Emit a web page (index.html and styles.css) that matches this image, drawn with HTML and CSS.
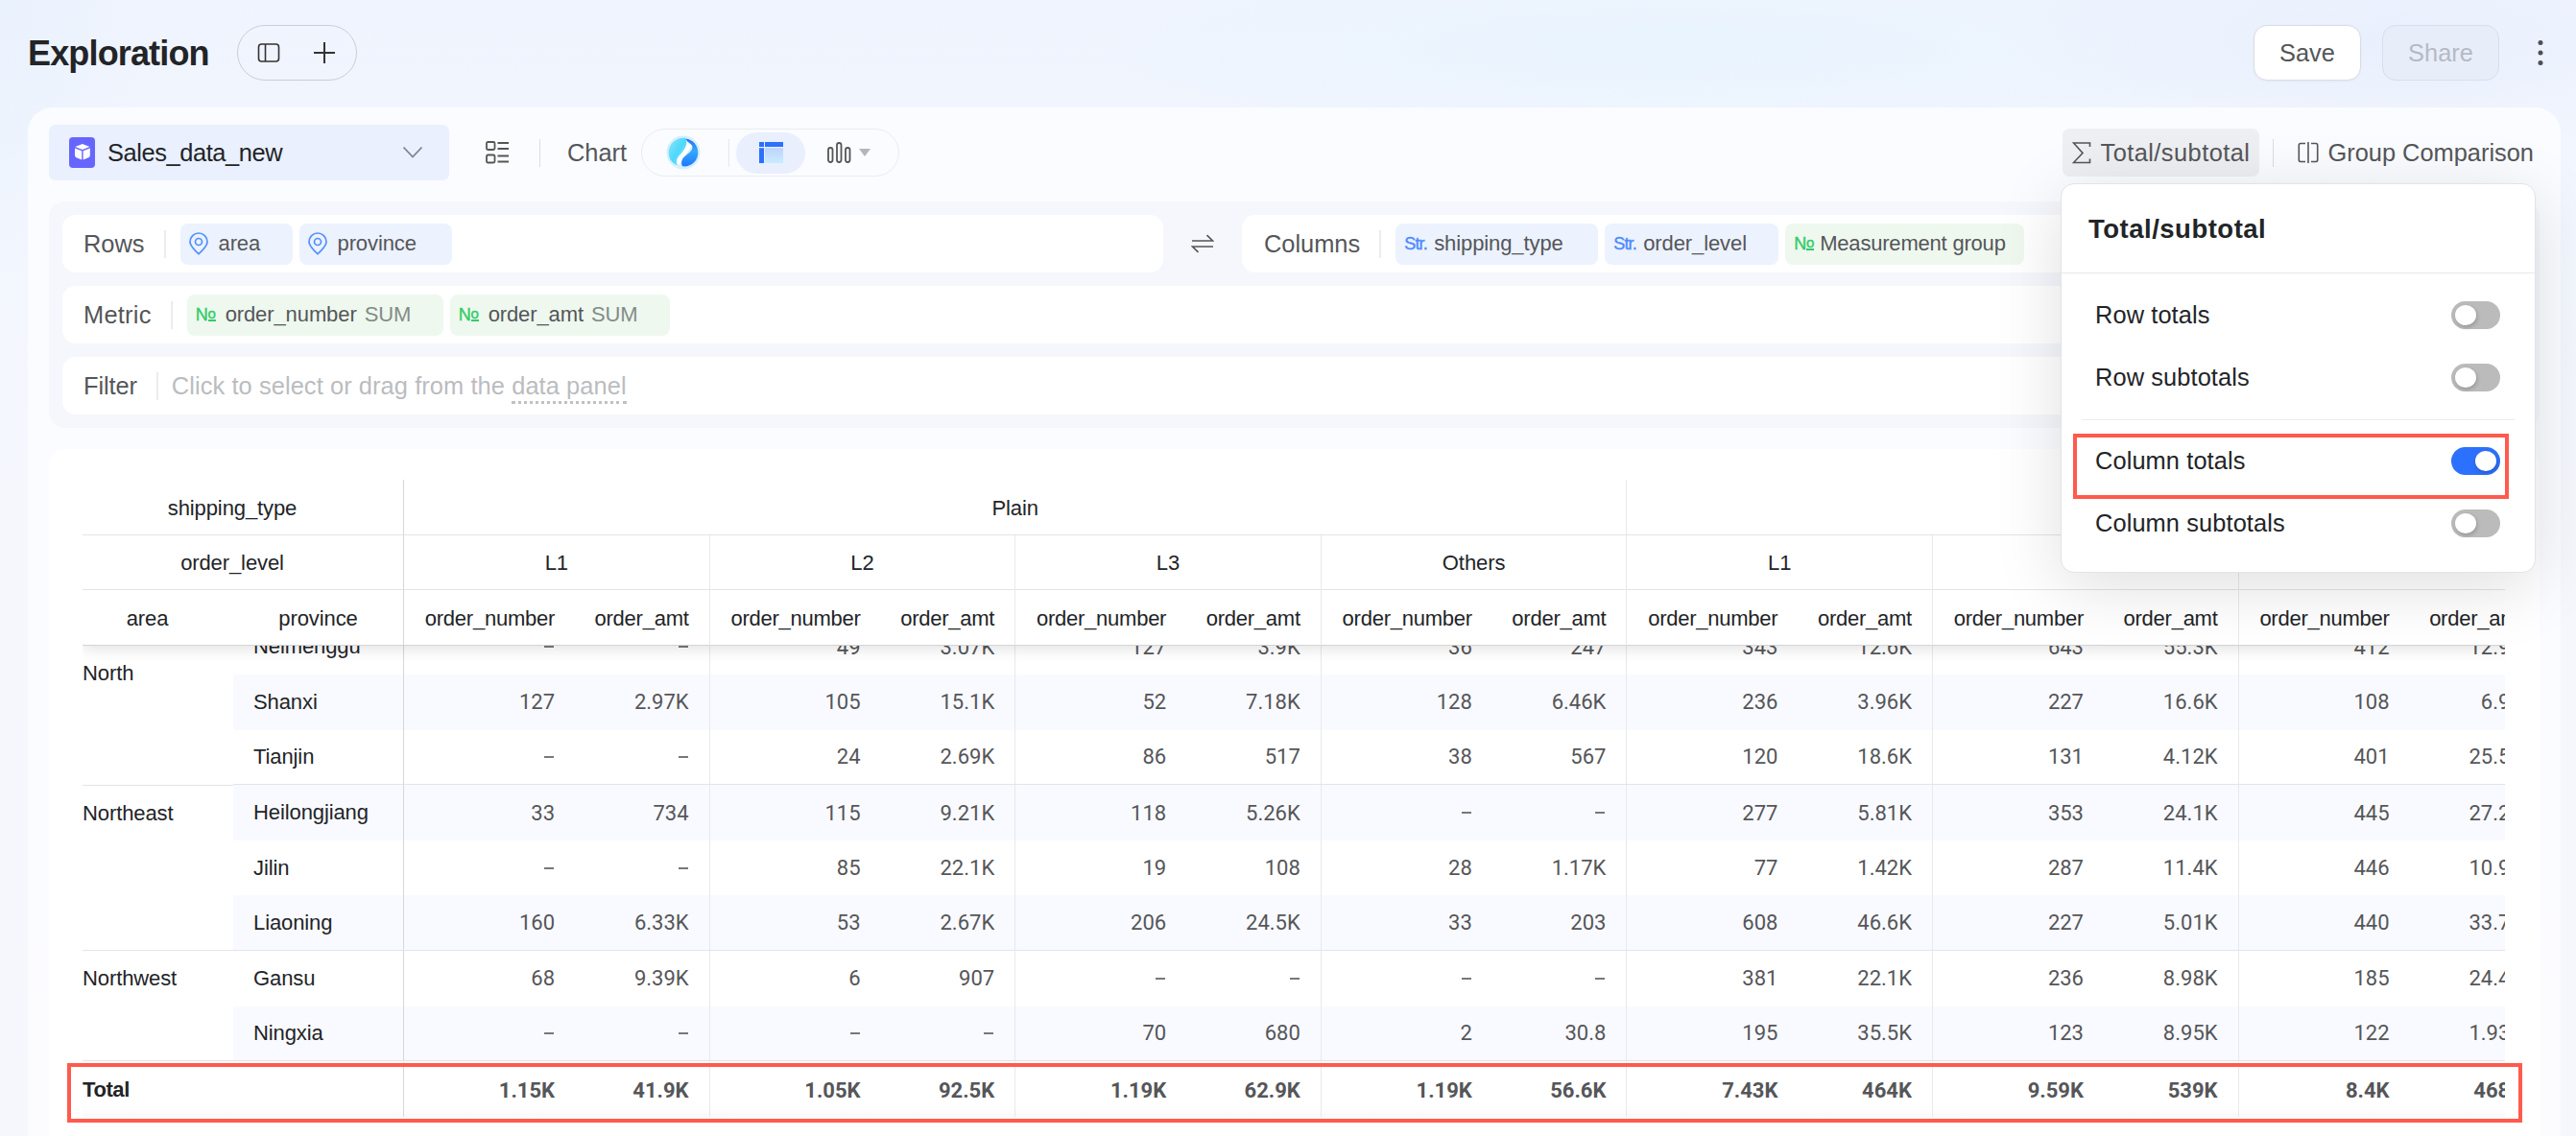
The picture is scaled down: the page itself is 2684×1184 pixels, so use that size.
FILE: index.html
```html
<!DOCTYPE html>
<html lang="en">
<head>
    <meta charset="UTF-8">
    <title>Exploration</title>
    <meta name="viewport" content="width=device-width, initial-scale=1.0">
    <link rel="stylesheet" href="styles.css">
</head>
<body>
    <header class="topbar">
        <h1>Exploration</h1>
        <div class="tab-pill">
            <svg width="24" height="24" viewBox="0 0 24 24" fill="none" stroke="#333" stroke-width="1.6"><rect x="1.5" y="3" width="21" height="18" rx="3"/><path d="M8.5 3v18"/></svg>
            <svg width="24" height="24" viewBox="0 0 24 24" fill="none" stroke="#333" stroke-width="2"><path d="M12 1v22M1 12h22"/></svg>
        </div>
        <div class="top-actions">
            <button class="btn">Save</button>
            <button class="btn disabled">Share</button>
            <svg class="more" width="6" height="28" viewBox="0 0 6 28" fill="#4d4f54"><circle cx="3" cy="3.5" r="2.5"/><circle cx="3" cy="14" r="2.5"/><circle cx="3" cy="24.5" r="2.5"/></svg>
        </div>
    </header>

    <main class="panel">
        <div class="toolbar">
            <div class="dataset">
                <svg width="27" height="32" viewBox="0 0 27 32"><rect width="27" height="32" rx="4" fill="#6666ff"/><path d="M13.9 7l7.6 2.9-7.600 3.100-7.600-3.100z" fill="#fff"/><path d="M6 11.600l7.200 2.600v9.200l-5.700-2.200Q6 20.500 6 19z" fill="#fff"/><path d="M21.800 11.600l-7.200 2.600v9.200l5.700-2.200Q21.800 20.500 21.800 19z" fill="#fff"/></svg>
                <span>Sales_data_new</span>
                <svg class="chevron" width="22" height="14" viewBox="0 0 22 14" fill="none" stroke="#7d8391" stroke-width="1.8"><path d="M1.500 1.500L11 11.500l9.500-10"/></svg>
            </div>
            <svg class="list-icon" width="24" height="24" viewBox="0 0 24 24" fill="none" stroke="#555" stroke-width="1.800"><rect x="1" y="1" width="8.500" height="8" rx="1.500"/><rect x="1" y="14.500" width="8.500" height="8" rx="1.500"/><path d="M12.500 2H24M12.500 8H24M12.500 15.500H24M12.500 21.500H24"/></svg>
            <i class="sep"></i>
            <span class="chart-label">Chart</span>
            <div class="chart-pill">
                <svg class="smart" width="36" height="36" viewBox="0 0 36 36">
                    <defs>
                        <linearGradient id="aqua" x1="0" y1="0" x2="1" y2="1"><stop offset="0" stop-color="#8ae6f8"/><stop offset=".5" stop-color="#4ed8fb"/><stop offset="1" stop-color="#9cecfb"/></linearGradient>
                        <linearGradient id="blue" x1="0" y1="0" x2="0" y2="1"><stop offset="0" stop-color="#1f6dff"/><stop offset=".45" stop-color="#35a8fc"/><stop offset="1" stop-color="#1f78ff"/></linearGradient>
                    </defs>
                    <circle cx="18" cy="18" r="17.500" fill="#d5effb"/>
                    <path d="M20 2.500C28 4 24 8 27 11L12 33C6 30 13 22 14 20z" fill="#fff"/>
                    <path d="M20.500 2.800C10.500 1.500 2.700 9 2.700 18c0 7 4.500 12.500 10.800 14.300-4-3-3-8 1-12C19 15.500 23.500 9 20.500 2.800z" fill="url(#aqua)"/>
                    <path d="M20.500 3.500C28 4.500 33.300 10.500 33.300 18c0 9-7.300 15.300-16.300 14.300-2-4-.5-8.300 3.500-11.300 6-4.500 8.500-7.500 6-11C24.500 7.500 22 7.500 20.500 3.500z" fill="url(#blue)"/>
                </svg>
                <i class="sep small"></i>
                <span class="active">
                    <svg width="25" height="22" viewBox="0 0 25 22"><defs><linearGradient id="cell" x1="0" y1="0" x2="0" y2="1"><stop offset="0" stop-color="#bfd3fb"/><stop offset="1" stop-color="#c8ecfe"/></linearGradient></defs><path d="M0 0h5v5H0zM6 0h19v5H6zM0 6.200h5V22H0z" fill="#2b71fd"/><path d="M6 6.200h19V22H6z" fill="url(#cell)"/></svg>
                </span>
                <svg class="bars" width="26" height="24" viewBox="0 0 26 24" fill="none" stroke="#555" stroke-width="1.800"><rect x="1" y="7" width="4.500" height="15" rx="2.200"/><rect x="10" y="2" width="4.500" height="20" rx="2.200"/><rect x="19" y="7" width="4.500" height="15" rx="2.200"/></svg>
                <svg width="12" height="8" viewBox="0 0 12 8"><path d="M0 0h12L6 8z" fill="#b5b6b9"/></svg>
            </div>
            <div class="tools">
                <button class="tool on">
                    <svg width="20" height="24" viewBox="0 0 20 24" fill="none" stroke="#555" stroke-width="1.600"><path d="M18.500 6V2H1.500L11 12.500 1.500 22.500h17v-4"/></svg>
                    Total/subtotal
                </button>
                <i class="sep"></i>
                <button class="tool">
                    <svg width="22" height="22" viewBox="0 0 22 22" fill="none" stroke="#555" stroke-width="1.600"><path d="M8 1.500H3q-1.700 0-1.700 1.700v15.600q0 1.700 1.700 1.700h5M14 1.500h5q1.700 0 1.700 1.700v15.600q0 1.700-1.700 1.700h-5M11 0v22"/></svg>
                    Group Comparison
                </button>
            </div>
        </div>

        <section class="config">
            <div class="config-line">
                <div class="shelf rows">
                    <label>Rows</label>
                    <i class="bar"></i>
                    <span class="chip dim w-area"><svg class="pin" width="22" height="24" viewBox="0 0 22 24"><path d="M11 22.700C7 19 2 14.500 2 10a9 9 0 0 1 18 0c0 4.500-5 9-9 12.700z"/><circle cx="11" cy="10" r="3.500"/></svg>area</span>
                    <span class="chip dim w-province"><svg class="pin" width="22" height="24" viewBox="0 0 22 24"><path d="M11 22.700C7 19 2 14.500 2 10a9 9 0 0 1 18 0c0 4.500-5 9-9 12.700z"/><circle cx="11" cy="10" r="3.500"/></svg>province</span>
                </div>
                <svg class="swap" width="24" height="20" viewBox="0 0 24 20" fill="none" stroke="#555" stroke-width="1.600"><path d="M1 7h21.500L16.500 1.200M23 13H1.500l6 5.800"/></svg>
                <div class="shelf cols">
                    <label>Columns</label>
                    <i class="bar"></i>
                    <span class="chip dim w-ship"><b class="str">Str.</b>shipping_type</span>
                    <span class="chip dim w-level"><b class="str">Str.</b>order_level</span>
                    <span class="chip num w-group"><b class="no">N<u>o</u></b>Measurement group</span>
                </div>
            </div>
            <div class="shelf metric">
                <label>Metric</label>
                <i class="bar"></i>
                <span class="chip num w-number"><b class="no">N<u>o</u></b>order_number<em>SUM</em></span>
                <span class="chip num w-amt"><b class="no">N<u>o</u></b>order_amt<em>SUM</em></span>
            </div>
            <div class="shelf filter">
                <label>Filter</label>
                <i class="bar"></i>
                <span class="placeholder">Click to select or drag from the <span class="link">data panel</span></span>
            </div>
        </section>

        <section class="sheet">
            <div class="pivot">
                <div class="head">
                    <div class="hrow">
                        <div class="corner">shipping_type</div>
                        <div class="span4">Plain</div>
                        <div class="span4"></div>
                    </div>
                    <div class="hrow">
                        <div class="corner">order_level</div>
                        <div class="span1">L1</div>
                        <div class="span1">L2</div>
                        <div class="span1">L3</div>
                        <div class="span1">Others</div>
                        <div class="span1">L1</div>
                        <div class="span1"></div>
                        <div class="span1"></div>
                    </div>
                    <div class="hrow fields" id="fields">
                        <div class="area-h">area</div>
                        <div class="province-h">province</div>
                    </div>
                </div>
                <div class="body">
                    <div class="areas">
                        <div class="north">North</div>
                        <div class="northeast">Northeast</div>
                        <div class="northwest">Northwest</div>
                    </div>
                    <div class="records" id="records"></div>
                </div>
                <div class="total" id="total">
                    <div class="total-label">Total</div>
                </div>
            </div>
        </section>
    </main>

    <aside class="popover">
        <h2>Total/subtotal</h2>
        <div class="options">
            <div class="option">Row totals<span class="switch"></span></div>
            <div class="option">Row subtotals<span class="switch"></span></div>
            <hr>
            <div class="option">Column totals<span class="switch on"></span></div>
            <div class="option">Column subtotals<span class="switch"></span></div>
        </div>
    </aside>

    <div class="mark mark-option"></div>
    <div class="mark mark-total"></div>

    <script>
      // province followed by order_number / order_amt pairs
      const rows = [
        'Neimenggu – – 49 3.07K 127 3.9K 36 247 343 12.6K 643 55.3K 412 12.9K',
        'Shanxi 127 2.97K 105 15.1K 52 7.18K 128 6.46K 236 3.96K 227 16.6K 108 6.9K',
        'Tianjin – – 24 2.69K 86 517 38 567 120 18.6K 131 4.12K 401 25.5K',
        'Heilongjiang 33 734 115 9.21K 118 5.26K – – 277 5.81K 353 24.1K 445 27.2K',
        'Jilin – – 85 22.1K 19 108 28 1.17K 77 1.42K 287 11.4K 446 10.9K',
        'Liaoning 160 6.33K 53 2.67K 206 24.5K 33 203 608 46.6K 227 5.01K 440 33.7K',
        'Gansu 68 9.39K 6 907 – – – – 381 22.1K 236 8.98K 185 24.4K',
        'Ningxia – – – – 70 680 2 30.8 195 35.5K 123 8.95K 122 1.93K'
      ];
      const totals = '1.15K 41.9K 1.05K 92.5K 1.19K 62.9K 1.19K 56.6K 7.43K 464K 9.59K 539K 8.4K 468K';

      // even cells are order_number, odd cells are order_amt
      const cells = list => list.map((v, i) =>
        `<div class="${i % 2 ? 'amt' : 'number'}">${v === '–' ? '<s></s>' : v}</div>`).join('');

      document.getElementById('records').innerHTML = rows.map(r => {
        const [name, ...values] = r.split(' ');
        return `<div class="record"><div class="name">${name}</div>${cells(values)}</div>`;
      }).join('');
      document.getElementById('total').insertAdjacentHTML('beforeend', cells(totals.split(' ')));
      document.getElementById('fields').insertAdjacentHTML('beforeend',
        cells(Array.from({ length: 14 }, (_, i) => i % 2 ? 'order_amt' : 'order_number')));
    </script>
</body>
</html>
```
FILE: styles.css
```css
:root {
    --text: #222427;
    --muted: #555659;
    --line: #e9e9ec;
    --blue: #2b71fd;
    --red: #ff5a4d;
    --group: 318.6px;
    --row: 57.6px;
}
* {
    box-sizing: border-box;
}
html, body {
    margin: 0;
    padding: 0;
}
body {
    width: 2684px;
    height: 1184px;
    overflow: hidden;
    position: relative;
    padding: 0 16px 0 29px;
    color: var(--text);
    font-family: "Liberation Sans", Arial, sans-serif;
    font-size: 25.4px;
    background:
        radial-gradient(ellipse 700px 110px at 1750px 50px, #e9f4fe 0%, transparent 100%),
        radial-gradient(ellipse 400px 120px at 2480px 40px, #e9f0fd 0%, transparent 100%),
        radial-gradient(ellipse 160px 300px at 0 0, #eaf2fd 0%, transparent 100%),
        linear-gradient(180deg, #f0f4fe 0%, #f3f7fe 25%, #f5f7fc 50%, #f5f7fc 100%);
}
h1, h2 {
    margin: 0;
}
button {
    font: inherit;
    margin: 0;
    border: none;
    background: none;
    color: var(--muted);
}
svg {
    display: block;
    flex: none;
}

/* top bar */
.topbar {
    display: flex;
    align-items: center;
    height: 112px;
    padding: 0 33px 2px 0;
}
.topbar h1 {
    width: 218px;
    font-size: 36px;
    letter-spacing: -0.85px;
    padding-top: 2px;
}
.tab-pill {
    display: flex;
    align-items: center;
    gap: 34px;
    width: 125px;
    height: 58px;
    padding-left: 20px;
    border: 1px solid #cbced8;
    border-radius: 29px;
}
.top-actions {
    margin-left: auto;
    display: flex;
    align-items: center;
    gap: 22px;
}
.btn {
    width: 112px;
    height: 58px;
    background: #fff;
    border: 1px solid #dadce2;
    border-radius: 14px;
    box-shadow: 0 1px 3px #0000000a;
}
.btn.disabled {
    width: 122px;
    color: #b6bac4;
    background: #e8eef9;
    border-color: #d9dfea;
    box-shadow: none;
}
.more {
    margin-left: 18px;
    margin-right: -15px;
}

/* panel */
.panel {
    width: 2639px;
    height: 1072px;
    padding: 18px 22px 0;
    border-radius: 26px 26px 0 0;
    background: linear-gradient(180deg, #fafcff 0%, #fcfcff 100%);
}
.toolbar {
    display: flex;
    align-items: center;
    height: 58px;
}
.dataset {
    display: flex;
    align-items: center;
    width: 417px;
    height: 58px;
    padding: 0 27px 0 21px;
    border-radius: 7px;
    background: #eaf0fe;
    letter-spacing: -0.4px;
}
.dataset span {
    margin-left: 13px;
}
.chevron {
    margin-left: auto;
}
.list-icon {
    margin-left: 38px;
}
.sep {
    width: 1px;
    height: 29px;
    background: #dcdde1;
    margin-left: 32px;
}
.chart-label {
    margin-left: 28px;
    width: 77px;
    color: var(--muted);
}
.chart-pill {
    display: flex;
    align-items: center;
    width: 269px;
    height: 50px;
    border: 1px solid #ebecf0;
    border-radius: 25px;
}
.smart {
    margin-left: 25px;
}
.sep.small {
    margin-left: 29px;
    background: #e6e7eb;
}
.active {
    display: flex;
    align-items: center;
    justify-content: center;
    width: 72px;
    height: 43px;
    margin-left: 7px;
    border-radius: 22px;
    background: #e9effd;
}
.bars {
    margin: 0 7px 0 23px;
}
.tools {
    margin-left: auto;
    margin-right: -3px;
    display: flex;
    align-items: center;
}
.tool {
    display: flex;
    align-items: center;
    height: 50px;
    padding: 0 9px 0 10px;
    gap: 9px;
    white-space: nowrap;
    border-radius: 7px;
}
.tool.on {
    width: 205px;
    background: #eeeff2;
    letter-spacing: 0.45px;
}
.tools .sep {
    margin: 0 15px 0 14px;
}

/* shelves */
.config {
    display: flex;
    flex-direction: column;
    gap: 14px;
    margin-top: 22px;
    padding: 14px;
    height: 236px;
    border-radius: 16px;
    background: #f6f7fc;
}
.config-line {
    display: flex;
    align-items: center;
}
.shelf {
    display: flex;
    align-items: center;
    height: 60px;
    padding-left: 22px;
    border-radius: 14px;
    background: #fff;
}
.shelf.rows {
    width: 1147px;
}
.shelf.cols {
    flex: 1;
    padding-left: 23px;
}
.shelf label {
    color: var(--muted);
}
.shelf.metric label {
    letter-spacing: 0.25px;
}
.shelf.filter label {
    letter-spacing: -0.1px;
}
.swap {
    margin: 0 29px;
}
.bar {
    width: 2px;
    height: 29px;
    margin: 0 15px 0 20px;
    background: #ececee;
}
.filter .bar {
    margin-right: 14px;
}
.chip {
    display: flex;
    align-items: center;
    height: 43px;
    margin-right: 7px;
    padding-left: 8px;
    border-radius: 8px;
    font-size: 22px;
    letter-spacing: -0.1px;
    color: var(--muted);
    white-space: nowrap;
}
.chip.dim {
    background: #ecf2fe;
}
.chip.num {
    background: #eef8ef;
}
.chip em {
    margin-left: 8px;
    font-style: normal;
    color: #858b87;
}
.w-area { width: 117px; }
.w-province { width: 159px; }
.w-ship { width: 211px; }
.w-level { width: 181px; }
.w-group { width: 249px; letter-spacing: -0.2px; }
.w-group .no { width: 28px; }
.w-number { width: 267px; }
.w-amt { width: 229px; }
.pin {
    margin-right: 10px;
    fill: none;
    stroke: #5290ff;
    stroke-width: 1.7;
}
.str, .no {
    width: 32px;
    font-weight: 400;
    font-size: 18px;
    -webkit-text-stroke: .4px currentColor;
}
.str {
    color: #4a8bff;
    letter-spacing: -0.8px;
    padding-left: 1px;
}
.no {
    display: flex;
    align-items: center;
    padding-left: 1px;
    color: #32cc66;
}
.no u {
    font-size: 15px;
    line-height: 11px;
    height: 14px;
    text-decoration: none;
    border-bottom: 2px solid currentColor;
}
.placeholder {
    color: #bbbcbf;
    letter-spacing: 0.09px;
}
.link {
    padding-bottom: 2px;
    border-bottom: 3px dotted #c0c1c4;
}

/* pivot table */
.sheet {
    margin-top: 22px;
    height: 716px;
    padding: 32px 36px 0 35px;
    border-radius: 16px 16px 0 0;
    background: #fff;
}
.pivot {
    height: 664px;
    overflow: hidden;
    font-size: 22px;
    letter-spacing: -0.1px;
    position: relative;
}
.hrow, .record, .total {
    display: flex;
    width: max-content;
}
.hrow > div {
    height: 57.5px;
    padding-top: 3px;
    flex: none;
    display: flex;
    align-items: center;
    justify-content: center;
    border-bottom: 1px solid #e4e4e7;
    border-right: 1px solid var(--line);
}
.head {
    width: max-content;
    position: relative;
    background: #fff;
    box-shadow: 0 4px 14px #0000001c;
    z-index: 1;
}
.hrow .corner {
    width: 335px;
    padding-right: 22px;
    border-right-color: #d6d7da;
}
.hrow .span4 {
    width: calc(var(--group) * 4);
}
.hrow .span1 {
    width: var(--group);
}
.hrow .area-h {
    width: 157px;
    padding-right: 22px;
    border-right: none;
}
.hrow .province-h {
    width: 178px;
    border-right-color: #d6d7da;
}
.hrow.fields > div {
    border-bottom-color: #d4d4d7;
}
.number, .amt {
    display: flex;
    flex: none;
    align-items: center;
    justify-content: flex-end;
    padding-right: 22px;
}
.hrow .number, .hrow .amt {
    justify-content: flex-end;
    letter-spacing: -0.25px;
}
.number, .hrow .number {
    width: 179px;
    border-right: none;
}
.amt {
    width: 139.6px;
    border-right: 1px solid var(--line);
}
.hrow .amt, .amt {
    padding-right: 21px;
}
.body {
    display: flex;
    height: 434px;
    overflow: hidden;
}
.areas {
    width: 157px;
    flex: none;
}
.areas div {
    border-bottom: 1px solid #e4e5ea;
    padding-top: 16px;
}
.areas .north { height: 146px; }
.areas .northeast { height: calc(var(--row) * 3); }
.areas .northwest { height: calc(var(--row) * 2); }
.records {
    margin-top: -27px;
}
.record {
    height: var(--row);
}
.record:nth-child(even) {
    background: #f9faff;
}
.record:nth-child(3), .record:nth-child(6), .record:nth-child(8) {
    border-bottom: 1px solid #e2e4ea;
}
.name {
    display: flex;
    align-items: center;
    width: 178px;
    padding-left: 21px;
    border-right: 1px solid #d6d7da;
}
.record .number, .record .amt, .total .number, .total .amt {
    font-family: Roboto, sans-serif;
    color: #555659;
    letter-spacing: 0;
}
.record s {
    width: 10px;
    height: 2px;
    margin-right: 1px;
    background: #77787b;
}
.total {
    height: 57px;
    font-weight: 700;
    background: linear-gradient(0deg, #f9f9fa 0, #fff 10px);
}
.total .number, .total .amt, .total-label {
    padding-top: 2px;
}
.total-label {
    display: flex;
    align-items: center;
    width: 335px;
    letter-spacing: -0.4px;
    border-right: 1px solid #d6d7da;
}

/* totals menu */
.popover {
    position: absolute;
    left: 2147px;
    top: 191px;
    width: 495px;
    height: 406px;
    background: #fff;
    border: 1px solid #e3e4e8;
    border-radius: 14px;
    box-shadow: 0 14px 70px #00000021;
    z-index: 2;
}
.popover h2 {
    height: 93px;
    padding-left: 28px;
    border-bottom: 1px solid #e9e9ec;
    font-size: 27.5px;
    line-height: 93px;
    letter-spacing: 0.5px;
}
.options {
    padding: 11px 21px;
}
.option {
    display: flex;
    align-items: center;
    justify-content: space-between;
    height: 65px;
    padding: 0 15px 0 14px;
    letter-spacing: 0.1px;
}
.options hr {
    margin: 11px 0 10px;
    border: none;
    height: 1px;
    background: #ececee;
}
.switch {
    width: 51px;
    height: 29px;
    padding: 4px;
    border-radius: 15px;
    background: #bbbbbc;
    display: flex;
}
.switch:before {
    content: "";
    width: 22px;
    height: 21px;
    border-radius: 50%;
    background: #fff;
    box-shadow: 1px 2px 4px #0003;
}
.switch.on {
    background: var(--blue);
    justify-content: flex-end;
}
.mark {
    position: absolute;
    border: 4px solid var(--red);
    z-index: 3;
}
.mark-option {
    left: 2160px;
    top: 452px;
    width: 454px;
    height: 68px;
}
.mark-total {
    left: 70px;
    top: 1108px;
    width: 2558px;
    height: 62px;
}
```
